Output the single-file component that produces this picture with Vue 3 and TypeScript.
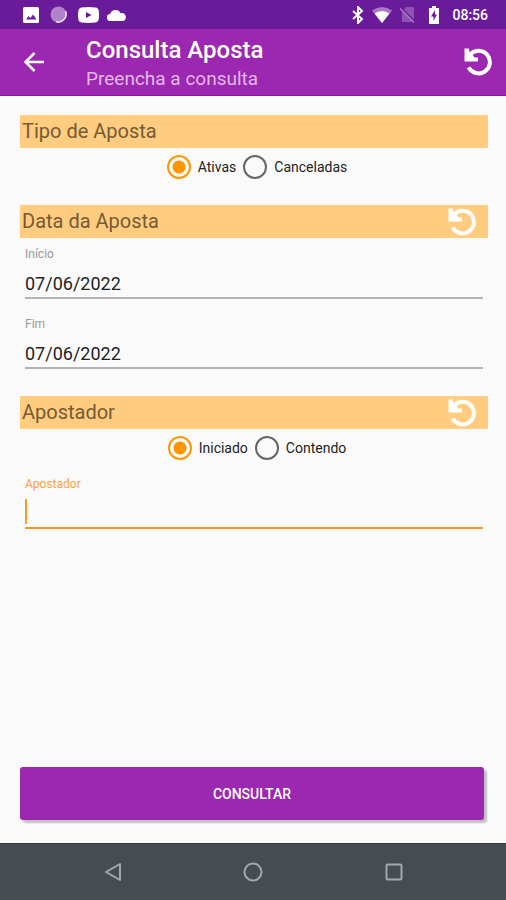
<script setup lang="ts">
import { ref } from 'vue'

const today = '07/06/2022'
const betType = ref('ativas')
const startDate = ref(today)
const endDate = ref(today)
const matchMode = ref('iniciado')
const bettor = ref('')

const undoArc = 'M6.500 6.200A11.300 11.300 0 1 1 4.600 19.400'
const undoHead = 'M0.500 0.500H5L5.500 4.500 9 7.500 10.500 9.500H14V13.500H0.500Z'

function resetDates(): void {
  startDate.value = today
  endDate.value = today
}

function resetBettor(): void {
  matchMode.value = 'iniciado'
  bettor.value = ''
}

function resetAll(): void {
  betType.value = 'ativas'
  resetDates()
  resetBettor()
}
</script>

<template>
  <div class="screen">
    <div class="status">
      <div class="status-left">
        <svg width="16" height="16" viewBox="0 0 16 16" aria-hidden="true">
          <path fill="#fff" fill-rule="evenodd" d="M1.5 0h13A1.5 1.5 0 0 1 16 1.5v13a1.5 1.5 0 0 1-1.5 1.5h-13A1.5 1.5 0 0 1 0 14.500v-13A1.5 1.5 0 0 1 1.500 0ZM3 12.500h10.500L10 7.500 7.500 11 5.500 9Z" />
        </svg>
        <svg width="17" height="17" viewBox="0 0 17 17" aria-hidden="true">
          <circle cx="8.500" cy="8.500" r="8" fill="#b083cb" />
          <path d="M15.500 5A8 8 0 0 1 6 15.800" fill="none" stroke="#f0e2f6" stroke-width="1.500" />
        </svg>
        <svg width="21" height="16" viewBox="0 0 21 16" aria-hidden="true">
          <path fill="#fff" fill-rule="evenodd" d="M3.500 .5Q10.500-.3 17.500 .5 20.500 .7 20.700 4q.5 4 0 8-.3 3-3.200 3.500-7 .8-14 0Q.6 15 .3 12q-.5-4 0-8Q.6 1 3.500 .5ZM8 5v6L13.500 8Z" />
        </svg>
        <svg width="20" height="12" viewBox="0 0 20 12" aria-hidden="true">
          <path fill="#fff" d="M3.500 12a3.500 3.500 0 0 1-.3-7A5.500 5.500 0 0 1 13.500 4.200 3.900 3.900 0 0 1 16 12Z" />
        </svg>
      </div>
      <div class="status-right">
        <svg width="12" height="18" viewBox="0 0 12 18" aria-hidden="true">
          <path d="M1 5l9 8-4 4V1l4 4-9 8" fill="none" stroke="#fff" stroke-width="2" />
        </svg>
        <svg class="wifi" width="20" height="16" viewBox="0 0 20 16" aria-hidden="true">
          <path fill="#a779c6" d="M10 16 0 3.500Q10-3.500 20 3.500Z" />
          <path fill="#fff" d="M10 16 2.500 6.500Q10 1.500 17.500 6.500Z" />
        </svg>
        <svg class="sim" width="16" height="17" viewBox="0 0 16 17" aria-hidden="true">
          <path fill="#8f52b3" d="M6 1h7a1 1 0 0 1 1 1v14H2V5Z" />
          <path d="M1.500 2 16 16.500" stroke="#6a1b9a" stroke-width="1.500" />
          <path d="M0 2.500 14 16.500" stroke="#a779c6" stroke-width="1.500" />
        </svg>
        <svg class="battery" width="12" height="18" viewBox="0 0 12 18" aria-hidden="true">
          <path fill="#fff" fill-rule="evenodd" d="M4 0h4v2h3v16H1V2h3ZM7 4 3 10.500h2.500V15L9 8.500H7Z" />
        </svg>
        <span>08:56</span>
      </div>
    </div>

    <header class="bar">
      <button class="back" type="button" aria-label="Voltar">
        <svg width="20" height="20" viewBox="0 0 20 20">
          <path d="M20 10H2M10.500 1 1.500 10l9 9" fill="none" stroke="#fff" stroke-width="2.500" />
        </svg>
      </button>
      <div class="titles">
        <h1>Consulta Aposta</h1>
        <p>Preencha a consulta</p>
      </div>
      <button class="undo" type="button" aria-label="Limpar consulta" @click="resetAll">
        <svg width="28" height="28" viewBox="0 0 28 28">
          <path :d="undoArc" fill="none" stroke="#fff" stroke-width="4" />
          <path :d="undoHead" fill="#fff" />
        </svg>
      </button>
    </header>

    <main class="content">
      <section>
        <h2>Tipo de Aposta</h2>
        <div class="options" role="radiogroup" aria-label="Tipo de Aposta">
          <label><input v-model="betType" type="radio" name="tipo" value="ativas" />Ativas</label>
          <label><input v-model="betType" type="radio" name="tipo" value="canceladas" />Canceladas</label>
        </div>
      </section>

      <section>
        <div class="heading">
          <h2>Data da Aposta</h2>
          <button class="undo" type="button" aria-label="Limpar datas" @click="resetDates">
            <svg width="28" height="28" viewBox="0 0 28 28">
              <path :d="undoArc" fill="none" stroke="#fff" stroke-width="4" />
              <path :d="undoHead" fill="#fff" />
            </svg>
          </button>
        </div>
        <div class="field">
          <label for="inicio">Início</label>
          <input id="inicio" v-model="startDate" type="text" />
        </div>
        <div class="field">
          <label for="fim">Fim</label>
          <input id="fim" v-model="endDate" type="text" />
        </div>
      </section>

      <section>
        <div class="heading">
          <h2>Apostador</h2>
          <button class="undo" type="button" aria-label="Limpar apostador" @click="resetBettor">
            <svg width="28" height="28" viewBox="0 0 28 28">
              <path :d="undoArc" fill="none" stroke="#fff" stroke-width="4" />
              <path :d="undoHead" fill="#fff" />
            </svg>
          </button>
        </div>
        <div class="options" role="radiogroup" aria-label="Apostador">
          <label><input v-model="matchMode" type="radio" name="modo" value="iniciado" />Iniciado</label>
          <label><input v-model="matchMode" type="radio" name="modo" value="contendo" />Contendo</label>
        </div>
        <div class="field active">
          <label for="apostador">Apostador</label>
          <input id="apostador" v-model="bettor" type="text" />
          <span v-if="!bettor" class="caret"></span>
        </div>
      </section>

      <button class="submit" type="button">CONSULTAR</button>
    </main>

    <nav class="system">
      <button type="button" aria-label="Voltar">
        <svg width="20" height="20" viewBox="0 0 20 20">
          <path d="M18 2v16L4 10Z" fill="none" stroke="#a2a9ad" stroke-width="2" stroke-linejoin="round" />
        </svg>
      </button>
      <button type="button" aria-label="Início">
        <svg width="20" height="20" viewBox="0 0 20 20">
          <circle cx="10" cy="10" r="8.500" fill="none" stroke="#a2a9ad" stroke-width="2" />
        </svg>
      </button>
      <button type="button" aria-label="Recentes">
        <svg width="20" height="20" viewBox="0 0 20 20">
          <rect x="2.500" y="2.500" width="15" height="15" rx="1" fill="none" stroke="#a2a9ad" stroke-width="2" />
        </svg>
      </button>
    </nav>
  </div>
</template>

<style>
body {
  margin: 0;
}
</style>

<style scoped>
.screen {
  display: flex;
  flex-direction: column;
  min-height: 100vh;
  background: #fafafa;
  color: #222;
  font-family: Roboto, "Liberation Sans", sans-serif;
}
.screen * {
  box-sizing: border-box;
}
h1,
h2,
p {
  margin: 0;
  font-weight: 400;
}
button {
  padding: 0;
  border: 0;
  background: none;
  color: inherit;
  font-family: inherit;
  cursor: pointer;
}
svg {
  display: block;
  flex: none;
}
.status {
  display: flex;
  justify-content: space-between;
  height: 29px;
  padding: 0 18px 0 23px;
  background: #6a1b9a;
  color: #fff;
  font-size: 14px;
  font-weight: 500;
}
.status-left,
.status-right {
  display: flex;
  align-items: center;
}
.status-left {
  gap: 11px;
}
.status-left svg:nth-child(3) {
  margin-right: -3px;
}
.wifi {
  margin-left: 8px;
}
.sim {
  margin-left: 8px;
}
.battery {
  margin: 0 12px;
}
.bar {
  display: flex;
  align-items: center;
  height: 67px;
  padding: 0 14px 0 24px;
  background: #9c27b0;
  border-bottom: 1px solid #8a169f;
  color: #fff;
}
.titles {
  flex: 1;
  padding: 4px 0 0 42px;
}
h1 {
  font-size: 24px;
  font-weight: 500;
  line-height: 30px;
}
.titles p {
  color: #e2b8e9;
  font-size: 19px;
  line-height: 28px;
}
.content {
  display: flex;
  flex: 1;
  flex-direction: column;
  gap: 18px;
  padding: 19px 18px 23px 20px;
}
h2,
.heading {
  height: 33px;
  background: #ffcc80;
  color: #755b36;
  font-size: 20px;
  line-height: 33px;
}
h2 {
  padding-left: 2px;
}
.heading {
  display: flex;
  justify-content: space-between;
  padding-right: 12px;
}
.options {
  display: flex;
  justify-content: center;
  gap: 7px;
  height: 39px;
  padding: 0 0 1px 6px;
  font-size: 14px;
}
.options label {
  display: flex;
  align-items: center;
  gap: 7px;
}
.options input {
  width: 24px;
  height: 24px;
  margin: 0;
  appearance: none;
  border: 2px solid #666;
  border-radius: 50%;
}
.options input:checked {
  border-color: #ff9800;
  background: radial-gradient(circle, #ff9800 6px, transparent 7px);
}
.field {
  position: relative;
  display: flex;
  flex-direction: column;
  padding: 8px 5px 9px;
}
.field label {
  color: #999;
  font-size: 12px;
  line-height: 16px;
}
.field input {
  width: 100%;
  height: 37px;
  padding: 7px 0 0;
  border: 0;
  border-bottom: 2px solid #b5b5b5;
  border-radius: 0;
  outline: 0;
  background: transparent;
  color: #222;
  font-family: inherit;
  font-size: 18px;
}
.active label {
  color: #ffa040;
}
.active input {
  border-color: #f79424;
}
.caret {
  position: absolute;
  bottom: 14px;
  left: 5px;
  width: 2px;
  height: 25px;
  background: #f79d2a;
  pointer-events: none;
}
.submit {
  height: 53px;
  margin: auto 4px 0 0;
  border-radius: 3px;
  background: #9c27b0;
  box-shadow: 3px 3px 2px #c4bfc4;
  color: #fff;
  font-size: 14px;
  font-weight: 500;
}
.system {
  display: flex;
  justify-content: center;
  gap: 121px;
  height: 57px;
  background: #454d52;
  border-top: 1px solid #32393d;
}
</style>
